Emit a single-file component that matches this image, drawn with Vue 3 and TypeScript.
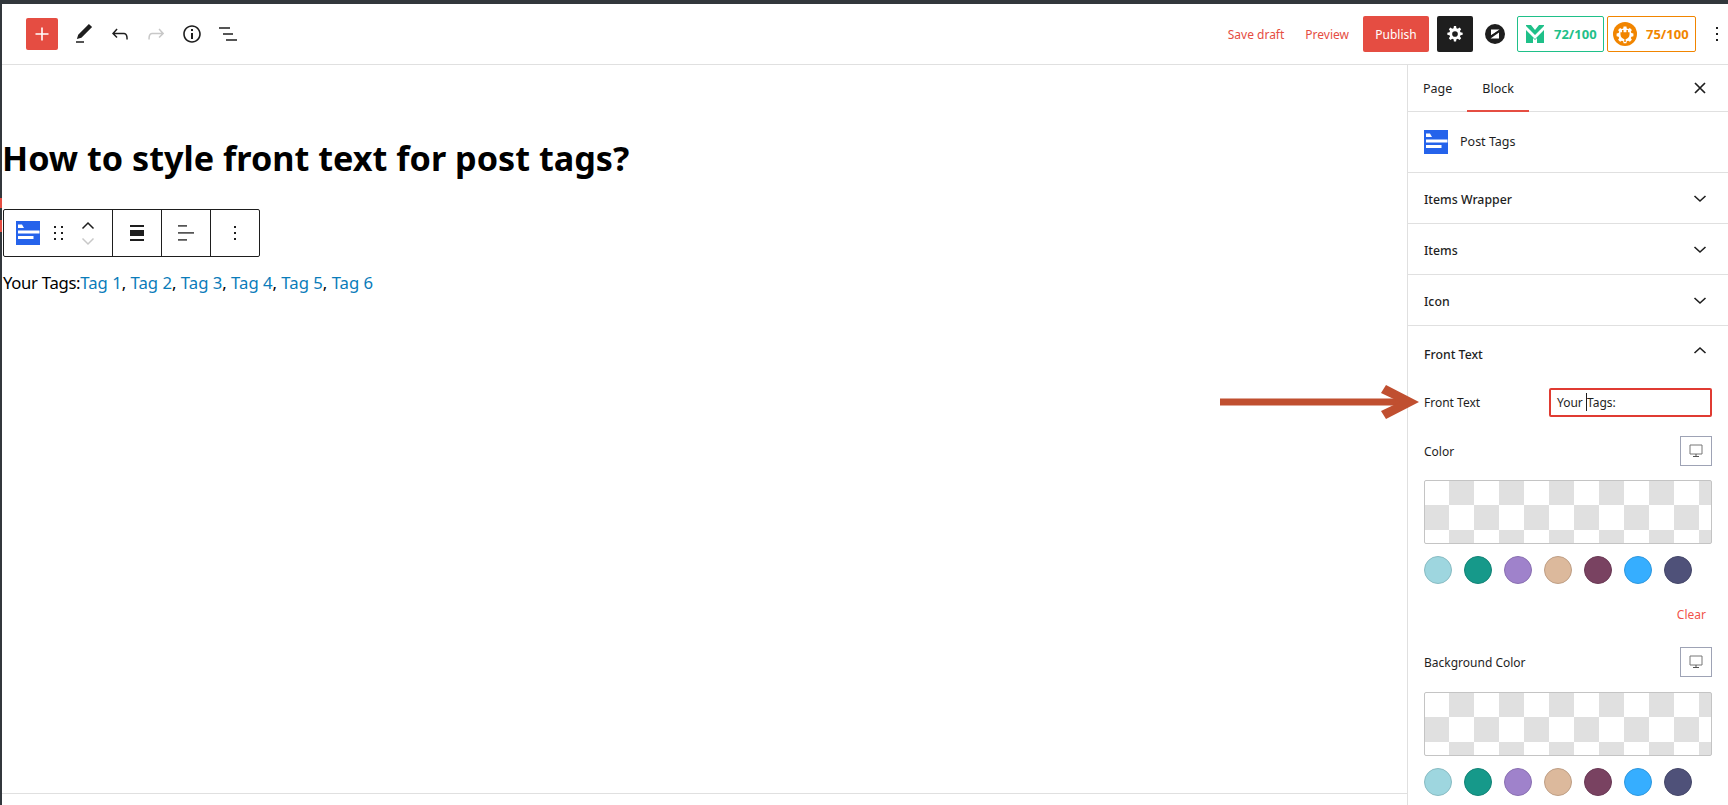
<script setup lang="ts">
const tags = ['Tag 1', 'Tag 2', 'Tag 3', 'Tag 4', 'Tag 5', 'Tag 6'];
const swatches = [
    { bg: '#9ed6df', line: '#89bcc3' },
    { bg: '#16998a', line: '#128376' },
    { bg: '#9f82cb', line: '#8a70b2' },
    { bg: '#dcb99c', line: '#bf9f85' },
    { bg: '#794261', line: '#6a3955' },
    { bg: '#36aeff', line: '#2f98de' },
    { bg: '#4f5179', line: '#454769' },
];
const panels = ['Items Wrapper', 'Items', 'Icon'];
</script>

<template>
    <div class="page">
        <header class="topbar">
            <div class="tools">
                <button class="add">
                    <svg width="16" height="16" viewBox="0 0 16 16"><path d="M8 1.5v13M1.5 8h13" stroke="#fff" stroke-width="1.6" /></svg>
                </button>
                <svg class="tool" width="24" height="24" viewBox="0 0 24 24"><path d="M20.1 5.1 16.9 2 6.2 12.7l-1.3 4.4 4.5-1.3L20.1 5.1zM4 20.8h8v-1.5H4v1.5z" fill="#1e1e1e" /></svg>
                <svg class="tool" width="24" height="24" viewBox="0 0 24 24"><path d="M18.3 11.7c-.6-.6-1.4-.9-2.3-.9H6.7l2.9-3.3-1.1-1-4.5 5L8.5 16l1-1-2.7-2.7H16c.5 0 .9.2 1.3.5 1 1 1 3.4 1 4.5v.3h1.5v-.2c0-1.5 0-4.3-1.5-5.7z" fill="#1e1e1e" /></svg>
                <svg class="tool" width="24" height="24" viewBox="0 0 24 24"><path d="M15.6 6.5l-1.1 1 2.9 3.3H8c-.9 0-1.7.3-2.3.9-1.4 1.5-1.4 4.2-1.4 5.6v.2h1.5v-.3c0-1.1 0-3.5 1-4.5.3-.3.7-.5 1.3-.5h9.2L14.5 15l1.1 1.1 4.6-4.6-4.6-5z" fill="#c8c8c8" /></svg>
                <svg class="tool" width="24" height="24" viewBox="0 0 24 24"><path d="M12 3.2c-4.8 0-8.8 3.9-8.8 8.8 0 4.8 3.900 8.800 8.800 8.800 4.800 0 8.800-3.900 8.800-8.800 0-4.800-4-8.800-8.800-8.800zm0 16c-4 0-7.200-3.300-7.200-7.200C4.800 8 8 4.800 12 4.800s7.200 3.300 7.200 7.200c0 4-3.200 7.200-7.200 7.200zM11 17h2v-6h-2v6zm0-8h2V7h-2v2z" fill="#1e1e1e" /></svg>
                <svg class="tool" width="24" height="24" viewBox="0 0 24 24"><path d="M3 5.200h11v1.500H3zM7 11.200h10v1.500H7zM10 17.200h11v1.500H10z" fill="#1e1e1e" /></svg>
            </div>
            <div class="actions">
                <a class="link save">Save draft</a>
                <a class="link preview">Preview</a>
                <button class="publish">Publish</button>
                <button class="settings">
                    <svg width="20" height="20" viewBox="0 0 24 24"><path fill-rule="evenodd" d="M13.3 2.500h-2.600l-.4 2.600-1.700.7-2.100-1.500-1.900 1.900 1.500 2.100-.7 1.700-2.600.4v2.600l2.600.4.700 1.700-1.500 2.100 1.900 1.900 2.100-1.500 1.700.7.4 2.600h2.600l.4-2.600 1.700-.7 2.100 1.500 1.900-1.900-1.500-2.100.7-1.700 2.600-.4v-2.600l-2.600-.4-.7-1.700 1.500-2.100-1.900-1.900-2.100 1.500-1.700-.7-.4-2.600zM12 8.600a3.400 3.400 0 1 1 0 6.800 3.400 3.400 0 0 1 0-6.800z" fill="#fff" /></svg>
                </button>
                <svg class="zlogo" width="20" height="20" viewBox="0 0 20 20"><circle cx="10" cy="10" r="10" fill="#1e1e1e" /><path d="M6 5.500h8.500L6 11.500zM14 14.500H5.500L14 8.500z" fill="#fff" /><path d="M5 12.500 15 6.500" stroke="#1e1e1e" stroke-width="1.400" /></svg>
                <div class="score green">
                    <svg width="18" height="18" viewBox="0 0 18 18"><path d="M0 0h5l4 5 4-5h5v1L9 10 0 1zM0 5l9 9 9-9v13h-7v-5l-2 2-2-2v5H0z" fill="#1fc089" /></svg>
                    <span>72/100</span>
                </div>
                <div class="score orange">
                    <svg width="24" height="24" viewBox="0 0 24 24"><circle cx="12" cy="12" r="12" fill="#f18500" /><path fill-rule="evenodd" d="M13.400 4.500h-2.800l-.4 2-1.400.6-1.700-1.100-2 2 1.100 1.700-.6 1.400-2 .4v2.800l2 .4.600 1.400-1.100 1.700 2 2 1.700-1.100 1.400.6.4 2h2.800l.4-2 1.400-.6 1.700 1.100 2-2-1.100-1.700.6-1.400 2-.4v-2.800l-2-.4-.6-1.400 1.100-1.700-2-2-1.700 1.100-1.400-.6z" fill="#fff" /><path d="M9.800 8v3M14.200 8v3M8.200 11h7.600v1.600a3.800 3.800 0 0 1-7.600 0zM12 16v4" stroke="#f18500" stroke-width="1.500" fill="#f18500" /></svg>
                    <span>75/100</span>
                </div>
                <svg class="more" width="24" height="24" viewBox="0 0 24 24"><path d="M13 19h-2v-2h2v2zm0-6h-2v-2h2v2zm0-6h-2V5h2v2z" fill="#1e1e1e" /></svg>
            </div>
        </header>

        <div class="body">
            <main class="editor">
                <div class="canvas">
                    <h1>How to style front text for post tags?</h1>
                    <div class="block-toolbar">
                        <div class="group first">
                            <svg class="blockicon" width="24" height="24" viewBox="0 0 24 24"><rect width="24" height="24" fill="#2563eb" /><path d="M2 3.500h4l2 3.500H2zM2 9.500h21.500v3H2zM2 15h15.500v3H2z" fill="#fff" /></svg>
                            <svg class="drag" width="10" height="16" viewBox="0 0 10 16"><path d="M0 1h2v2H0zM7 1h2v2H7zM0 7h2v2H0zM7 7h2v2H7zM0 13h2v2H0zM7 13h2v2H7z" fill="#1e1e1e" /></svg>
                            <div class="movers">
                                <svg width="14" height="9" viewBox="0 0 14 9"><path d="M1.500 7.500 7 2l5.500 5.500" fill="none" stroke="#1e1e1e" stroke-width="1.500" /></svg>
                                <svg width="14" height="9" viewBox="0 0 14 9"><path d="M1.500 1.500 7 7l5.500-5.500" fill="none" stroke="#c8c8c8" stroke-width="1.500" /></svg>
                            </div>
                        </div>
                        <div class="group">
                            <svg width="14" height="16" viewBox="0 0 14 16"><path d="M0 0h14v2H0zM0 5h14v6H0zM0 14h14v2H0z" fill="#1e1e1e" /></svg>
                        </div>
                        <div class="group">
                            <svg width="16" height="16" viewBox="0 0 16 16"><path d="M0 0h9v1.800H0zM0 7h16v1.800H0zM0 14h9v1.800H0z" fill="#555" /></svg>
                        </div>
                        <div class="group last">
                            <svg width="24" height="24" viewBox="0 0 24 24"><path d="M13 19h-2v-2h2v2zm0-6h-2v-2h2v2zm0-6h-2V5h2v2z" fill="#1e1e1e" /></svg>
                        </div>
                    </div>
                    <p class="tags"><span>Your Tags:</span><template v-for="(t, i) in tags" :key="t"><a>{{ t }}</a><template v-if="i < tags.length - 1">, </template></template></p>
                </div>
                <div class="foot"></div>
            </main>

            <aside class="sidebar">
                <div class="tabs">
                    <div class="tabset">
                        <span class="tab">Page</span>
                        <span class="tab active">Block</span>
                    </div>
                    <svg width="24" height="24" viewBox="0 0 24 24"><path d="M7 7l10 10M17 7 7 17" stroke="#1e1e1e" stroke-width="1.700" /></svg>
                </div>
                <div class="blockcard">
                    <svg width="24" height="24" viewBox="0 0 24 24"><rect width="24" height="24" fill="#2563eb" /><path d="M2 3.500h4l2 3.500H2zM2 9.500h21.500v3H2zM2 15h15.500v3H2z" fill="#fff" /></svg>
                    <span>Post Tags</span>
                </div>
                <div v-for="p in panels" :key="p" class="panel-head">
                    <span>{{ p }}</span>
                    <svg width="24" height="24" viewBox="0 0 24 24"><path d="M17.500 10 12 15l-5.500-5" fill="none" stroke="#1e1e1e" stroke-width="1.600" /></svg>
                </div>
                <div class="panel-head open">
                    <span>Front Text</span>
                    <svg width="24" height="24" viewBox="0 0 24 24"><path d="M6.500 14 12 9l5.500 5" fill="none" stroke="#1e1e1e" stroke-width="1.600" /></svg>
                </div>
                <div class="panel-body">
                    <div class="field">
                        <label>Front Text</label>
                        <div class="input"><span>Your </span><i class="caret"></i><span>Tags:</span></div>
                    </div>
                    <div class="field color">
                        <label>Color</label>
                        <button class="device">
                            <svg width="16" height="16" viewBox="0 0 16 16"><path d="M2 2h12v9H2z" fill="none" stroke="#777" /><path d="M8 11v2.500M5 13.500h6" stroke="#555" /></svg>
                        </button>
                    </div>
                    <div class="checker"></div>
                    <div class="swatches">
                        <span v-for="s in swatches" :key="s.bg" class="swatch" :style="{ background: s.bg, borderColor: s.line }"></span>
                    </div>
                    <div class="clear">Clear</div>
                    <div class="field color second">
                        <label>Background Color</label>
                        <button class="device">
                            <svg width="16" height="16" viewBox="0 0 16 16"><path d="M2 2h12v9H2z" fill="none" stroke="#777" /><path d="M8 11v2.500M5 13.500h6" stroke="#555" /></svg>
                        </button>
                    </div>
                    <div class="checker"></div>
                    <div class="swatches">
                        <span v-for="s in swatches" :key="s.bg" class="swatch" :style="{ background: s.bg, borderColor: s.line }"></span>
                    </div>
                </div>
            </aside>
        </div>

        <!-- red annotation arrow drawn over the screenshot -->
        <svg class="arrow" width="200" height="40" viewBox="0 0 200 40">
            <path d="M0 16.500h180v7H0z" fill="#c04f30" />
            <path d="M166 3l33 17-33 17-5-8 19-9-19-9z" fill="#c04f30" />
        </svg>
        <span class="mark one"></span>
        <span class="mark two"></span>
    </div>
</template>

<style>
html,
body {
    margin: 0;
    background: #fff;
    overflow: hidden;
}
</style>

<style scoped>
.page {
    position: relative;
    display: flex;
    flex-direction: column;
    height: 805px;
    box-sizing: border-box;
    padding: 4px 0 0 2px;
    background: #32373c;
    font-family: 'Noto Sans', 'Open Sans', sans-serif;
    color: #1e1e1e;
    overflow: hidden;
}

button {
    border: 0;
    padding: 0;
    font: inherit;
    display: flex;
    align-items: center;
    justify-content: center;
}

.topbar {
    flex: none;
    height: 61px;
    box-sizing: border-box;
    border-bottom: 1px solid #e0e0e0;
    background: #fff;
    display: flex;
    align-items: center;
    justify-content: space-between;
}

.tools {
    display: flex;
    align-items: center;
    padding-left: 24px;
}

.add {
    width: 32px;
    height: 32px;
    border-radius: 2px;
    background: #e54d42;
    margin-right: 14px;
}

.tool {
    margin-right: 12px;
}

.actions {
    display: flex;
    align-items: center;
    height: 36px;
}

.link {
    font-size: 12px;
    color: #e54d42;
    white-space: nowrap;
}

.save {
    margin-right: 21px;
}

.preview {
    margin-right: 14px;
}

.publish {
    width: 66px;
    height: 36px;
    border-radius: 2px;
    background: #e54d42;
    color: #fff;
    font-size: 12px;
    margin-right: 8px;
}

.settings {
    width: 36px;
    height: 36px;
    border-radius: 2px;
    background: #1e1e1e;
    margin-right: 12px;
}

.zlogo {
    margin-right: 12px;
}

.score {
    height: 36px;
    box-sizing: border-box;
    border: 1px solid;
    border-radius: 2px;
    display: flex;
    align-items: center;
    font-size: 13px;
    font-weight: 700;
}

.green {
    width: 87px;
    border-color: #1fc089;
    color: #1fc089;
    padding-left: 8px;
    gap: 10px;
    margin-right: 3px;
}

.orange {
    width: 89px;
    border-color: #f18500;
    color: #f18500;
    padding-left: 5px;
    gap: 9px;
}

.more {
    margin: 0 -1px 0 9px;
}

.body {
    flex: 1;
    display: flex;
    min-height: 0;
    background: #fff;
}

.editor {
    flex: 1;
    min-width: 0;
    display: flex;
    flex-direction: column;
}

.canvas {
    flex: 1;
    padding-left: 1px;
    color: #000;
}

h1 {
    margin: 71px 0 0 -1px;
    font-size: 34.2px;
    line-height: 44px;
    font-weight: 700;
}

.block-toolbar {
    margin-top: 29px;
    display: inline-flex;
    height: 48px;
    box-sizing: border-box;
    border: 1px solid #1e1e1e;
    border-radius: 2px;
    background: #fff;
}

.group {
    width: 49px;
    box-sizing: border-box;
    border-right: 1px solid #1e1e1e;
    display: flex;
    align-items: center;
    justify-content: center;
}

.group.first {
    width: 109px;
    justify-content: flex-start;
    padding-left: 12px;
}

.group.last {
    width: 48px;
    border-right: 0;
}

.drag {
    margin-left: 14px;
}

.movers {
    margin-left: 17px;
    display: flex;
    flex-direction: column;
    gap: 7px;
}

.movers svg {
    display: block;
}

.tags {
    margin: 13px 0 0;
    font-size: 16.7px;
    line-height: 26px;
    white-space: nowrap;
}

.tags span {
    letter-spacing: -0.3px;
}

.tags a {
    color: #0a7cba;
}

.foot {
    flex: none;
    height: 11px;
    border-top: 1px solid #e0e0e0;
}

.sidebar {
    flex: none;
    width: 321px;
    box-sizing: border-box;
    border-left: 1px solid #e0e0e0;
    font-size: 12px;
}

.tabs {
    height: 47px;
    box-sizing: border-box;
    border-bottom: 1px solid #e0e0e0;
    display: flex;
    align-items: center;
    justify-content: space-between;
    padding: 0 16px 0 15px;
}

.tabset {
    display: flex;
    gap: 30px;
    height: 100%;
}

.tab {
    position: relative;
    line-height: 48px;
    font-size: 12.5px;
}

.tab.active::after {
    content: '';
    position: absolute;
    left: -15px;
    right: -15px;
    bottom: -1px;
    height: 2px;
    background: #e54d42;
}

.blockcard {
    height: 61px;
    box-sizing: border-box;
    border-bottom: 1px solid #e0e0e0;
    display: flex;
    align-items: center;
    gap: 12px;
    padding: 0 16px;
}

.blockcard span {
    margin-bottom: 2px;
    font-size: 12.5px;
}

.panel-head {
    height: 51px;
    box-sizing: border-box;
    border-bottom: 1px solid #e0e0e0;
    display: flex;
    align-items: center;
    justify-content: space-between;
    padding: 0 16px;
    font-weight: 500;
    font-size: 12.3px;
}

.panel-head span {
    padding-top: 2px;
}

.panel-head.open {
    border-bottom: 0;
    height: 50px;
}

.panel-head.open span {
    padding-top: 6px;
}

.panel-body {
    padding: 0 16px;
}

.field {
    display: flex;
    align-items: center;
    justify-content: space-between;
    height: 32px;
    margin-top: 10px;
}

.input {
    width: 163px;
    height: 29px;
    box-sizing: border-box;
    border: 2px solid #e03b32;
    border-radius: 2px;
    padding-left: 6px;
    display: flex;
    align-items: center;
    white-space: pre;
}

.caret {
    width: 1px;
    height: 18px;
    background: #1e1e1e;
}

.field.color {
    margin-top: 17px;
}

.device {
    width: 32px;
    height: 30px;
    box-sizing: border-box;
    border: 1px solid #9ea3b5;
    background: #fff;
}

.checker {
    margin-top: 13px;
    height: 64px;
    box-sizing: border-box;
    border: 1px solid #c4c4c4;
    border-radius: 2px;
    background: conic-gradient(#e0e0e0 25%, #fff 0 50%, #e0e0e0 0 75%, #fff 0) -1px -1px / 50px 50px;
}

.field.second + .checker {
    margin-top: 14px;
}

.swatches {
    margin-top: 12px;
    display: flex;
    gap: 12px;
}

.swatch {
    width: 28px;
    height: 28px;
    box-sizing: border-box;
    border: 1px solid;
    border-radius: 50%;
}

.clear {
    margin-top: 22px;
    text-align: right;
    color: #f1534a;
    padding-right: 6px;
    line-height: 18px;
}

.field.color.second {
    margin-top: 22px;
}

.arrow {
    position: absolute;
    left: 1220px;
    top: 382px;
}

.mark {
    position: absolute;
    left: 0;
    width: 2px;
    background: #e54d42;
}

.mark.one {
    top: 198px;
    height: 10px;
}

.mark.two {
    top: 220px;
    height: 12px;
}
</style>
